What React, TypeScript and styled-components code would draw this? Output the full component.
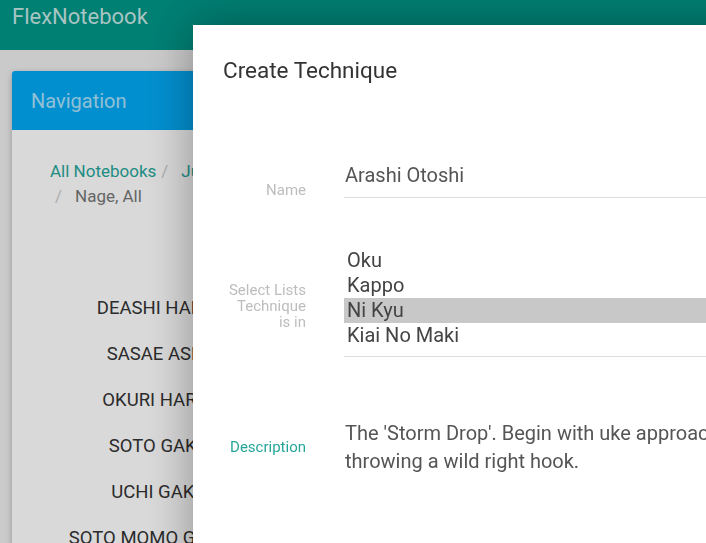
import React from "react";
import styled, { createGlobalStyle } from "styled-components";

const Global = createGlobalStyle`
  html, body {
    margin: 0;
    padding: 0;
    width: 100%;
    height: 100%;
    overflow: hidden;
    background: #eeeeee;
    font-family: Roboto, "Liberation Sans", sans-serif;
  }
  * { box-sizing: border-box; }
`;

const Page = styled.div`
  display: flex;
  flex-direction: column;
  min-height: 100vh;
`;

const AppBar = styled.header`
  height: 50px;
  background: #009688;
  padding: 4px 12px 0;
`;

const Brand = styled.div`
  font-size: 22px;
  line-height: 26px;
  color: rgba(255, 255, 255, 0.78);
`;

const Content = styled.main`
  padding: 21px 12px 0;
  display: flex;
`;

const NavCard = styled.section`
  width: 292px;
  background: #ffffff;
  border-radius: 3px 3px 0 0;
  box-shadow: 0 2px 6px rgba(0, 0, 0, 0.25);
  overflow: hidden;
`;

const NavHeader = styled.div`
  height: 59px;
  background: #03a9f4;
  color: rgba(255, 255, 255, 0.68);
  font-size: 20px;
  line-height: 60px;
  padding-left: 19px;
`;

const NavBody = styled.div`
  padding: 29px 38px 0;
`;

const Crumbs = styled.ol`
  list-style: none;
  margin: 0;
  padding: 0;
  font-size: 17px;
  line-height: 25px;
`;

const Crumb = styled.li<{ $active?: boolean }>`
  display: inline-block;
  color: ${(p) => (p.$active ? "#777777" : "#26a69a")};
  &:not(:first-child)::before {
    content: "/";
    padding: 0 13px 0 5px;
    color: #cccccc;
  }
`;

const TechList = styled.ul`
  list-style: none;
  margin: 87px 0 0;
  padding: 0;
  display: flex;
  flex-direction: column;
  gap: 22px;
`;

const TechItem = styled.li`
  text-align: center;
  font-size: 18.5px;
  line-height: 24px;
  color: #333333;
  white-space: nowrap;
`;

const Overlay = styled.div`
  position: fixed;
  inset: 0;
  background: rgba(0, 0, 0, 0.15);
`;

const Dialog = styled.div`
  position: fixed;
  left: 193px;
  top: 25px;
  width: 620px;
  bottom: -40px;
  background: #ffffff;
  box-shadow: 0 0 45px rgba(0, 0, 0, 0.35);
  padding: 32px 0 0 30px;
`;

const Title = styled.h2`
  margin: 0;
  font-weight: 400;
  font-size: 22.5px;
  line-height: 26px;
  color: #333333;
`;

const Row = styled.div<{ $top: number }>`
  display: grid;
  grid-template-columns: 83px 1fr;
  column-gap: 38px;
  align-items: center;
  margin-top: ${(p) => p.$top}px;
`;

const Label = styled.label<{ $shift?: number; $accent?: boolean }>`
  text-align: right;
  font-size: 15px;
  line-height: 16px;
  padding-top: ${(p) => p.$shift ?? 0}px;
  color: ${(p) => (p.$accent ? "#26a69a" : "#bdbdbd")};
`;

const Field = styled.div`
  border-bottom: 1px solid #dddddd;
  font-size: 20px;
  line-height: 25px;
  color: #555555;
`;

const TextValue = styled(Field)`
  padding: 0 0 9px 1px;
`;

const Options = styled(Field)`
  padding-bottom: 8px;
  display: flex;
  flex-direction: column;
`;

const Option = styled.div<{ $selected?: boolean }>`
  padding-left: 3px;
  color: #444444;
  background: ${(p) => (p.$selected ? "#c8c8c8" : "transparent")};
`;

const Description = styled.div`
  font-size: 20px;
  line-height: 28px;
  color: #555555;
  padding-left: 1px;
`;

const techniques = [
  "DEASHI HARAI",
  "SASAE ASHI",
  "OKURI HARAI",
  "SOTO GAKE",
  "UCHI GAKE",
  "SOTO MOMO GAESHI",
];

const lists = ["Oku", "Kappo", "Ni Kyu", "Kiai No Maki"];

export default function App() {
  return (
    <>
      <Global />
      <Page>
        <AppBar>
          <Brand>FlexNotebook</Brand>
        </AppBar>
        <Content>
          <NavCard>
            <NavHeader>Navigation</NavHeader>
            <NavBody>
              <Crumbs>
                <Crumb>All Notebooks</Crumb>
                <Crumb>Jujitsu</Crumb>
                <Crumb $active>Nage, All</Crumb>
              </Crumbs>
              <TechList>
                {techniques.map((t) => (
                  <TechItem key={t}>{t}</TechItem>
                ))}
              </TechList>
            </NavBody>
          </NavCard>
        </Content>
      </Page>
      <Overlay />
      <Dialog>
        <Title>Create Technique</Title>
        <Row $top={79}>
          <Label $shift={20}>Name</Label>
          <TextValue>Arashi Otoshi</TextValue>
        </Row>
        <Row $top={50}>
          <Label $shift={7}>Select Lists Technique is in</Label>
          <Options>
            {lists.map((l) => (
              <Option key={l} $selected={l === "Ni Kyu"}>
                {l}
              </Option>
            ))}
          </Options>
        </Row>
        <Row $top={62}>
          <Label $accent>Description</Label>
          <Description>
            The 'Storm Drop'. Begin with uke approaching and throwing a wild
            right hook.
          </Description>
        </Row>
      </Dialog>
    </>
  );
}
